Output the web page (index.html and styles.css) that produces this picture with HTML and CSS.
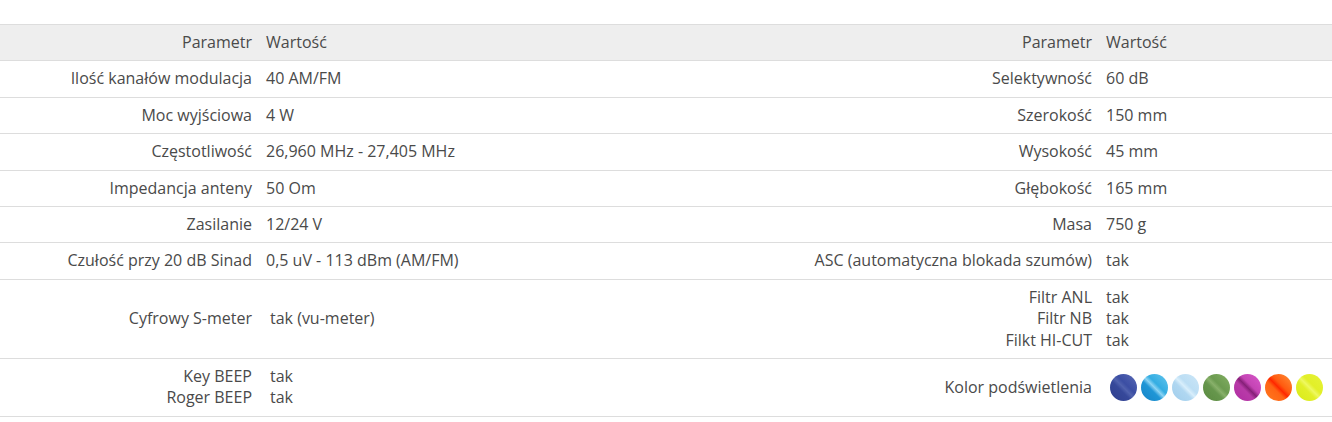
FILE: index.html
```html
<!DOCTYPE html>
<html lang="pl">
<head>
<meta charset="utf-8">
<link rel="stylesheet" href="styles.css">
</head>
<body>
<table class="spec">
  <colgroup>
    <col class="c1"><col class="c2"><col class="c3"><col class="c4">
  </colgroup>
  <thead>
    <tr><th class="lbl">Parametr</th><th class="val">Wartość</th><th class="lbl">Parametr</th><th class="val">Wartość</th></tr>
  </thead>
  <tbody>
    <tr><td class="lbl">Ilość kanałów modulacja</td><td class="val">40 AM/FM</td><td class="lbl">Selektywność</td><td class="val">60 dB</td></tr>
    <tr><td class="lbl">Moc wyjściowa</td><td class="val">4 W</td><td class="lbl">Szerokość</td><td class="val">150 mm</td></tr>
    <tr><td class="lbl">Częstotliwość</td><td class="val">26,960 MHz - 27,405 MHz</td><td class="lbl">Wysokość</td><td class="val">45 mm</td></tr>
    <tr><td class="lbl">Impedancja anteny</td><td class="val">50 Om</td><td class="lbl">Głębokość</td><td class="val">165 mm</td></tr>
    <tr><td class="lbl">Zasilanie</td><td class="val">12/24 V</td><td class="lbl">Masa</td><td class="val">750 g</td></tr>
    <tr><td class="lbl">Czułość przy 20 dB Sinad</td><td class="val">0,5 uV - 113 dBm (AM/FM)</td><td class="lbl">ASC (automatyczna blokada szumów)</td><td class="val">tak</td></tr>
    <tr><td class="lbl">Cyfrowy S-meter</td><td class="val inset">tak (vu-meter)</td><td class="lbl">Filtr ANL<br>Filtr NB<br>Filkt HI-CUT</td><td class="val">tak<br>tak<br>tak</td></tr>
    <tr><td class="lbl">Key BEEP<br>Roger BEEP</td><td class="val inset">tak<br>tak</td><td class="lbl">Kolor podświetlenia</td><td class="val"><div class="swatches"><span class="dot d1"></span><span class="dot d2"></span><span class="dot d3"></span><span class="dot d4"></span><span class="dot d5"></span><span class="dot d6"></span><span class="dot d7"></span></div></td></tr>
  </tbody>
</table>
</body>
</html>
```
FILE: styles.css
```css
html, body {
  margin: 0;
  padding: 0;
  background: #fff;
}
body {
  padding-top: 24px;
  font-family: "Open Sans", "Liberation Sans", sans-serif;
  font-size: 16px;
  line-height: 21.4px;
  color: #4a4a4a;
}
.spec {
  width: 1332px;
  border-collapse: collapse;
  table-layout: fixed;
}
.c1 { width: 259px; }
.c2 { width: 407px; }
.c3 { width: 433px; }
.c4 { width: 233px; }
.spec th, .spec td {
  padding: 7px 7px;
  border-top: 1px solid #ddd;
  border-bottom: 1px solid #ddd;
  font-weight: normal;
  vertical-align: middle;
}
.spec thead th {
  background: #eee;
}
.spec .lbl { text-align: right; }
.spec .val { text-align: left; }
.spec .inset { padding-left: 11px; }
.swatches {
  display: flex;
  gap: 4px;
  padding-left: 4px;
}
.dot {
  width: 27px;
  height: 27px;
  border-radius: 50%;
  display: block;
}
.d1 { background: linear-gradient(45deg, #2f3f8e 0%, #36489a 40%, #5062ae 50%, #3b4ea3 60%, #5a6ab6 100%); }
.d2 { background: linear-gradient(45deg, #1684c6 0%, #1f96d6 40%, #8cd4f4 50%, #34ade2 60%, #64c6ee 100%); }
.d3 { background: linear-gradient(45deg, #a0cdec 0%, #b0d7f1 40%, #d8eefb 50%, #bcdef4 60%, #cce6f7 100%); }
.d4 { background: linear-gradient(45deg, #5a8a40 0%, #66964c 40%, #88b06a 50%, #6c9b50 60%, #84b064 100%); }
.d5 { background: linear-gradient(45deg, #b02ca2 0%, #b83aa8 40%, #862078 50%, #c444b4 60%, #d858ca 100%); }
.d6 { background: linear-gradient(45deg, #ff7a20 0%, #ff6414 40%, #ff2800 50%, #ff5a10 60%, #ff9238 100%); }
.d7 { background: linear-gradient(45deg, #d8ea18 0%, #e2ef28 40%, #eef860 50%, #e2ef28 60%, #e6f238 100%); }
```
